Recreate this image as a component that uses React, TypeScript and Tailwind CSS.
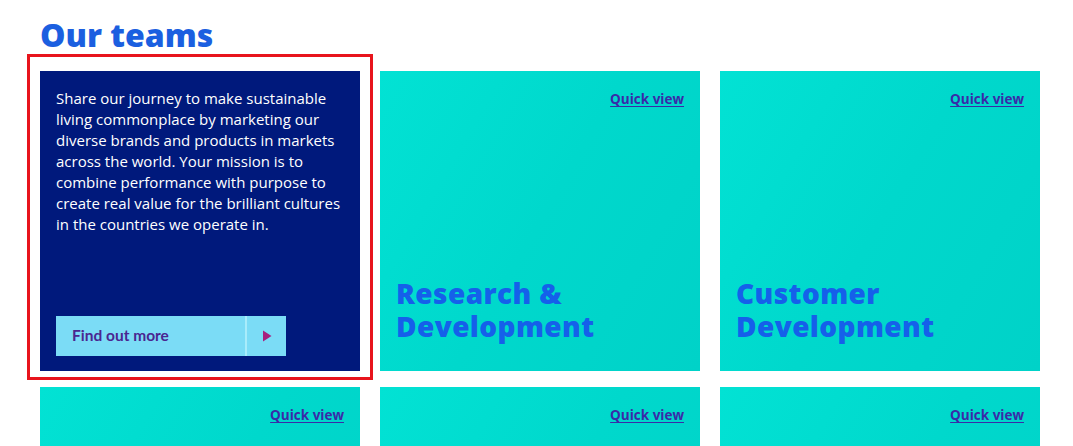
import React from "react";

function QuickView() {
  return (
    <div className="flex justify-end">
      <a href="#" className="text-[13.5px] font-bold text-[#3a2aa8] underline underline-offset-2 decoration-1 leading-[20px] font-['Open_Sans',sans-serif]">
        Quick view
      </a>
    </div>
  );
}

function TealCard({ title }: { title?: string }) {
  return (
    <div className="h-[300px] bg-[linear-gradient(120deg,#02e2d4_0%,#00d8cc_50%,#00d2c8_100%)] flex flex-col justify-between pt-[18px] pr-[16px] pb-[28px] pl-[16px]">
      <QuickView />
      {title ? (
        <h3 className="text-[28px] leading-[33px] font-extrabold tracking-[0.4px] text-[#1560ea] whitespace-pre-line font-['Open_Sans',sans-serif]">{title}</h3>
      ) : null}
    </div>
  );
}

export default function App() {
  return (
    <div className="w-[1073px] h-[446px] overflow-hidden bg-white font-['Lato',sans-serif]">
      <div className="pl-[40px] pt-[16px] w-[1040px]">
        <h2 className="text-[32px] leading-[38px] font-extrabold text-[#1b5fe0] font-['Open_Sans',sans-serif]">Our teams</h2>
        <div className="grid grid-cols-3 gap-x-[20px] gap-y-[16px] mt-[17px]">
          <div className="relative">
            <div className="absolute left-[-13px] right-[-13px] top-[-17px] bottom-[-9px] border-[3px] border-[#e8141c] pointer-events-none" />
            <div className="h-[300px] bg-[#00197c] flex flex-col justify-between pt-[17px] pb-[15px] px-[16px]">
              <p className="text-[15px] leading-[21px] text-white font-['Open_Sans',sans-serif] w-[288px]">
                Share our journey to make sustainable living commonplace by marketing our diverse brands and products in markets across the world. Your mission is to combine performance with purpose to create real value for the brilliant cultures in the countries we operate in.
              </p>
              <div className="flex h-[40px] w-[230px] bg-[#7bdcf6]">
                <div className="flex-1 flex items-center pl-[16px] text-[15.5px] font-bold text-[#4a2690] border-r-[2px] border-[#a8ecfb]">
                  Find out more
                </div>
                <div className="w-[39px] flex items-center justify-center">
                  <svg width="10" height="12" viewBox="0 0 10 12"><path d="M1 0.5 L9.5 6 L1 11.5 Z" fill="#a81f7e" /></svg>
                </div>
              </div>
            </div>
          </div>
          <TealCard title={"Research &\nDevelopment"} />
          <TealCard title={"Customer\nDevelopment"} />
          <TealCard />
          <TealCard />
          <TealCard />
        </div>
      </div>
    </div>
  );
}
